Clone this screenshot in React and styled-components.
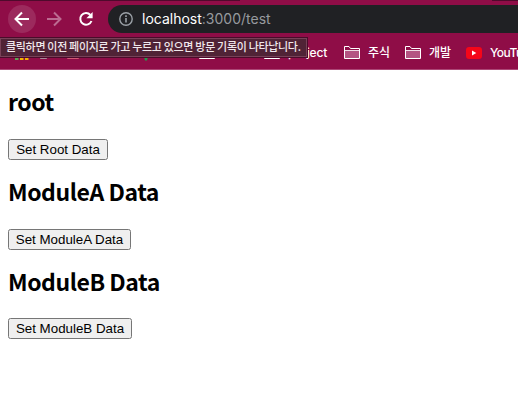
import React from "react";
import styled, { createGlobalStyle } from "styled-components";

const Global = createGlobalStyle`
  * { box-sizing: border-box; }
  body { margin: 0; background: #fff; overflow: hidden; }
`;

const Window = styled.div`
  position: relative;
  width: 518px;
  height: 412px;
  overflow: hidden;
  background: #fff;
`;

const TabEdge = styled.div`
  height: 1px;
  background: linear-gradient(90deg, #4f0a2c 0 240px, #8f0d47 240px 492px, #4f0a2c 492px);
`;

const Toolbar = styled.header`
  display: flex;
  align-items: center;
  height: 36px;
  padding: 0 0 0 8px;
  background: #8f0d47;
`;

const NavButton = styled.button`
  display: grid;
  place-items: center;
  width: 28px;
  height: 28px;
  margin: 0 4px 0 0;
  padding: 0;
  border: 0;
  border-radius: 50%;
  color: ${(p) => (p.$muted ? "#bc6b91" : "#fff")};
  background: ${(p) => (p.$active ? "#9c2a5d" : "transparent")};
`;

const AddressBar = styled.div`
  display: flex;
  align-items: center;
  flex: 1;
  height: 28px;
  margin-left: 4px;
  padding-left: 11px;
  border-radius: 14px 0 0 14px;
  background: #202124;
`;

const Url = styled.span`
  margin-left: 9px;
  font: 14px/20px Inter, sans-serif;
  color: #979a9e;
`;

const Host = styled.span`
  color: #fff;
`;

const Bookmarks = styled.nav`
  display: flex;
  align-items: center;
  height: 33px;
  background: #8f0d47;
  border-bottom: 1px solid #ac4776;
`;

const Bookmark = styled.span`
  display: flex;
  flex: none;
  align-items: center;
  gap: 8px;
  width: ${(p) => p.$width}px;
  color: #fff;
  font: 500 12px/16px Inter, "Noto Sans CJK KR", sans-serif;
  letter-spacing: ${(p) => (p.$tight ? "-0.55px" : "-0.15px")};
  white-space: nowrap;
`;

const Tooltip = styled.div`
  position: absolute;
  z-index: 1;
  top: 38px;
  left: 0;
  width: 307px;
  height: 19px;
  padding-left: 5px;
  border: 1px solid #784158;
  outline: 1px solid #4a0c2a;
  background: #502336;
  color: #f0e8ec;
  font: 500 11px/15px "Noto Sans CJK KR", sans-serif;
  letter-spacing: -0.32px;
  white-space: nowrap;
`;

const Page = styled.main`
  padding: 0 8px;
`;

const Section = styled.section`
  display: flex;
  flex-direction: column;
  align-items: flex-start;
  height: 90px;
`;

const Title = styled.h2`
  margin: 17px 0 ${(p) => p.$gap}px;
  height: 29px;
  font: 700 23px/29px "Noto Sans CJK KR", sans-serif;
  letter-spacing: -0.45px;
  color: #000;
`;

const ActionButton = styled.button`
  width: ${(p) => p.$width}px;
  height: 21px;
  padding: 0;
  border: 1px solid #767676;
  border-radius: 2.5px;
  background: #efefef;
  color: #000;
  font: 13.333px/17px "Liberation Sans", Arial, sans-serif;
  white-space: nowrap;
`;

const Arrow = ({ forward }) => (
  <svg width="16" height="16" viewBox="0 0 16 16" fill="none" stroke="currentColor" strokeWidth="2">
    <path d={forward ? "M1 8H14M8 1.5L14.5 8L8 14.5" : "M15 8H2M8 1.5L1.5 8L8 14.5"} />
  </svg>
);

const Reload = () => (
  <svg width="16" height="16" viewBox="0 0 16 16" fill="none">
    <path d="M12.4 4A5.8 5.8 0 1 0 13.5 10" stroke="currentColor" strokeWidth="2" />
    <path d="M14.6 1V7.2H8.4Z" fill="currentColor" />
  </svg>
);

const Info = () => (
  <svg width="14" height="14" viewBox="0 0 14 14" fill="none" stroke="#9aa0a6" strokeWidth="1.4">
    <circle cx="7" cy="7" r="6.2" />
    <path d="M7 6V10.5M7 3.3V4.9" strokeWidth="1.6" />
  </svg>
);

const Folder = () => (
  <svg width="16" height="14" viewBox="0 0 16 14" fill="none">
    <path d="M.5 12.5V.5H5L6.5 2.5H15.5V12.5Z" stroke="#fff" />
    <path d="M1 5H15V12H1Z" fill="#b45482" />
    <path d="M1 4.5H15" stroke="#efdbe5" />
  </svg>
);

const YouTube = () => (
  <svg width="16" height="12" viewBox="0 0 16 12">
    <rect width="16" height="12" rx="3" fill="#f50619" />
    <path d="M6 3.6V8.4L10.3 6Z" fill="#fff" />
  </svg>
);

const Analytics = () => (
  <svg width="14" height="14" viewBox="0 0 14 14">
    <path d="M0 9H3.5V14H0Z" fill="#5ba654" />
    <path d="M5 5H8.5V14H5ZM10 1H13.5V14H10Z" fill="#f4b400" />
  </svg>
);

const Card = ({ width, color }) => (
  <svg width={width} height="12" viewBox="0 0 12 12" preserveAspectRatio="none">
    <rect width="12" height="12" rx="1" fill={color} />
  </svg>
);

const Pin = () => (
  <svg width="8" height="16" viewBox="0 0 8 16"><path d="M0 5Q4-3 8 5L5 15.5H3Z" fill="#239b4a" /></svg>
);

const sections = [
  { name: "root", action: "Set Root Data", width: 100, gap: 23 },
  { name: "ModuleA Data", action: "Set ModuleA Data", width: 123, gap: 23 },
  { name: "ModuleB Data", action: "Set ModuleB Data", width: 124, gap: 22 },
];

export default function App() {
  return (
    <Window>
      <Global />
      <TabEdge />
      <Toolbar>
        <NavButton $active aria-label="Back"><Arrow /></NavButton>
        <NavButton $muted aria-label="Forward"><Arrow forward /></NavButton>
        <NavButton aria-label="Reload"><Reload /></NavButton>
        <AddressBar><Info /><Url><Host>localhost</Host>:3000/test</Url></AddressBar>
      </Toolbar>
      <Bookmarks>
        <Bookmark $width={15} />
        <Bookmark $width={25}><Analytics /></Bookmark>
        <Bookmark $width={27}><Card width={7} color="#a78b99" /></Bookmark>
        <Bookmark $width={75}><Card width={12} color="#cf5a73" /></Bookmark>
        <Bookmark $width={57}><Pin /></Bookmark>
        <Bookmark $width={65}><Folder /></Bookmark>
        <Bookmark $width={80}><Folder />project</Bookmark>
        <Bookmark $width={61}><Folder />주식</Bookmark>
        <Bookmark $width={61}><Folder />개발</Bookmark>
        <Bookmark $width={80} $tight><YouTube />YouTube</Bookmark>
      </Bookmarks>
      <Tooltip>클릭하면 이전 페이지로 가고 누르고 있으면 방문 기록이 나타납니다.</Tooltip>
      <Page>
        {sections.map((s) => (
          <Section key={s.name}>
            <Title $gap={s.gap}>{s.name}</Title>
            <ActionButton $width={s.width}>{s.action}</ActionButton>
          </Section>
        ))}
      </Page>
    </Window>
  );
}
